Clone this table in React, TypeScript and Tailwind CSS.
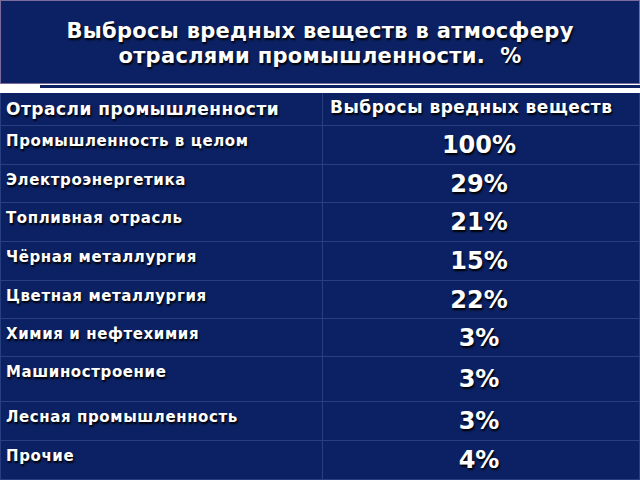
const rows = [
  { name: "Промышленность в целом", value: "100%", h: "h-[39px]" },
  { name: "Электроэнергетика", value: "29%", h: "h-[38px]" },
  { name: "Топливная отрасль", value: "21%", h: "h-[39px]" },
  { name: "Чёрная металлургия", value: "15%", h: "h-[39px]" },
  { name: "Цветная металлургия", value: "22%", h: "h-[38px]" },
  { name: "Химия и нефтехимия", value: "3%", h: "h-[38px]" },
  { name: "Машиностроение", value: "3%", h: "h-[45px]" },
  { name: "Лесная промышленность", value: "3%", h: "h-[39px]" },
  { name: "Прочие", value: "4%", h: "h-[39px]" },
];

export default function App() {
  return (
    <div className="w-[640px] h-[480px] bg-white overflow-hidden font-['DejaVu_Sans','Liberation_Sans',sans-serif] font-bold text-white [text-shadow:1px_2px_2px_#000]">
      <div className="h-[84px] bg-[#0c2163] border border-[#7c6c9c] flex items-center justify-center text-center text-[21px] leading-[25px] tracking-[0.3px] pt-[4px]">
        <h1>
          Выбросы вредных веществ в атмосферу
          <br />
          отраслями промышленности.&nbsp; %
        </h1>
      </div>

      <div className="pt-[1px] pl-[40px] pb-[5px]">
        <div className="h-[3px] bg-[#0c2163]" />
      </div>

      <div className="bg-[#0c2163] border-l border-r border-[#26407f]">
        <div className="flex h-[33px] border-b border-[#26407f]">
          <div className="w-[322px] border-r border-[#26407f] px-[5px] pt-[4px] text-[17px] tracking-[0.5px]">
            Отрасли промышленности
          </div>
          <div className="flex-1 px-[7px] pt-[2px] text-[17px] tracking-[0.5px]">
            Выбросы вредных веществ
          </div>
        </div>
        {rows.map((r) => (
          <div key={r.name} className={`flex border-b border-[#26407f] ${r.h}`}>
            <div className="w-[322px] border-r border-[#26407f] px-[5px] pt-[4px] text-[15px] tracking-[0.6px]">
              {r.name}
            </div>
            <div className="flex-1 flex items-center justify-center text-[24px] pr-[4px]">
              {r.value}
            </div>
          </div>
        ))}
      </div>
    </div>
  );
}
